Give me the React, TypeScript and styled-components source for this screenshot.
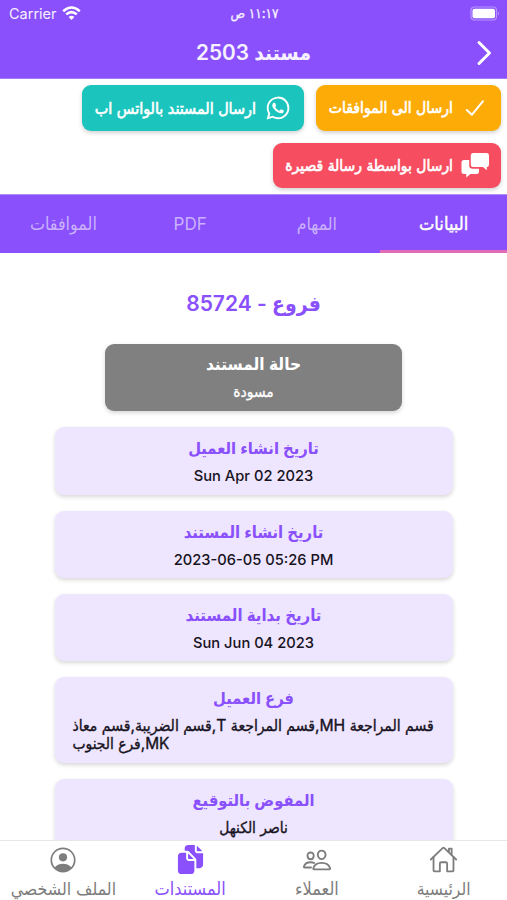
import React from "react";
import styled, { createGlobalStyle } from "styled-components";
import { IoDocuments, IoHomeOutline, IoLogoWhatsapp, IoPeopleOutline } from "react-icons/io5";

const PURPLE = "#8950fc";

const GlobalStyle = createGlobalStyle`
  * { box-sizing: border-box; }
  html, body { margin: 0; padding: 0; background: #fff; }
  body { font-family: Inter, "DejaVu Sans Condensed", "DejaVu Sans", sans-serif; }
`;

const Screen = styled.div`
  width: 507px;
  height: 900px;
  display: flex;
  flex-direction: column;
  overflow: hidden;
  direction: rtl;
  background: #fff;
`;

/* $ink thickens the glyphs for in-between weights; $shift nudges the baseline. */
const Text = styled.span<{ $size: number; $weight?: number; $ink?: number; $shift?: number }>`
  display: block;
  white-space: nowrap;
  font-size: ${(p) => p.$size}px;
  font-weight: ${(p) => p.$weight ?? 400};
  line-height: 20px;
  -webkit-text-stroke: ${(p) => p.$ink ?? 0}px currentColor;
  transform: translateY(${(p) => p.$shift ?? 0}px);
`;

const Header = styled.header`
  height: 79px;
  flex: none;
  background: ${PURPLE};
  color: #f6f0ff;
  border-bottom: 1px solid #a47bf8;
`;

const StatusBar = styled.div`
  height: 27px;
  direction: ltr;
  display: grid;
  grid-template-columns: 1fr auto 1fr;
  align-items: center;
  padding: 0 7px 0 9px;
`;

const Carrier = styled.div`
  display: flex;
  align-items: center;
  gap: 5px;
`;

const BatterySlot = styled.div`
  display: flex;
  justify-content: flex-end;
`;

const TitleBar = styled.div`
  height: 51px;
  display: grid;
  grid-template-columns: 46px 1fr 46px;
  align-items: center;
  justify-items: center;
`;

const Actions = styled.section`
  height: 115px;
  flex: none;
  display: flex;
  flex-wrap: wrap;
  align-content: flex-start;
  gap: 12px;
  padding: 6px 6px 0 0;
`;

const ActionButton = styled.button<{ $bg: string; $width: number; $height: number }>`
  width: ${(p) => p.$width}px;
  height: ${(p) => p.$height}px;
  display: flex;
  align-items: center;
  gap: 8px;
  padding: 0 12px;
  border: 0;
  border-radius: 9px;
  background: ${(p) => p.$bg};
  color: #fff;
  font-family: inherit;
  box-shadow: 0 2px 4px rgba(0, 0, 0, 0.18);
`;

const ButtonIcon = styled.span`
  width: 28px;
  height: 28px;
  flex: none;
  display: flex;
  align-items: center;
  justify-content: center;
`;

const ButtonLabel = styled.span`
  flex: 1;
  display: flex;
  justify-content: flex-start;
`;

const Tabs = styled.nav`
  height: 59px;
  flex: none;
  display: grid;
  grid-template-columns: repeat(4, 1fr);
  background: ${PURPLE};
  border-top: 1px solid #b08df8;
`;

const Tab = styled.div<{ $active?: boolean }>`
  display: flex;
  align-items: center;
  justify-content: center;
  color: ${(p) => (p.$active ? "#fff" : "#cbb0fc")};
  border-bottom: 3px solid ${(p) => (p.$active ? "#e26bb8" : PURPLE)};
`;

const Content = styled.main`
  flex: 1;
  min-height: 0;
  overflow: hidden;
  display: flex;
  flex-direction: column;
  align-items: center;
`;

const Heading = styled.h1`
  margin: 0;
  height: 91px;
  flex: none;
  display: flex;
  align-items: center;
  padding-top: 11px;
  color: ${PURPLE};
`;

const Card = styled.section<{ $height: number; $gray?: boolean }>`
  width: ${(p) => (p.$gray ? 297 : 398)}px;
  height: ${(p) => p.$height}px;
  margin-bottom: 16px;
  flex: none;
  padding-top: ${(p) => (p.$gray ? 10 : 11)}px;
  display: flex;
  flex-direction: column;
  align-items: center;
  gap: 8px;
  border-radius: 9px;
  background: ${(p) => (p.$gray ? "#808080" : "#eee5ff")};
  color: ${(p) => (p.$gray ? "#fff" : "#171321")};
  box-shadow: 0 2px 4px rgba(0, 0, 0, 0.16);
`;

const CardTitle = styled.div<{ $gray?: boolean }>`
  color: ${(p) => (p.$gray ? "#fff" : PURPLE)};
`;

const BranchList = styled.div`
  width: 362px;
  display: flex;
  flex-direction: column;
  align-items: flex-end;
  > span { line-height: 18px; }
`;

const BottomBar = styled.footer`
  height: 60px;
  flex: none;
  display: grid;
  grid-template-columns: repeat(4, 1fr);
  background: #fff;
  border-top: 1px solid #e8e8ea;
`;

const NavItem = styled.div<{ $active?: boolean }>`
  display: flex;
  flex-direction: column;
  align-items: center;
  padding-top: 4px;
  gap: 5px;
  color: ${(p) => (p.$active ? PURPLE : "#7d7d7d")};
`;

const NavIcon = styled.span`
  height: 29px;
  display: flex;
  align-items: center;
`;

const WifiIcon = () => (
  <svg width="19" height="15" viewBox="0 0 19 15" fill="none" stroke="#fff" strokeWidth="2.5">
    <path d="M1.2 5.2Q9.5-2.3 17.8 5.2" />
    <path d="M4.2 8.4Q9.5 3.9 14.8 8.4" />
    <path d="M6.6 10.9Q9.5 8.5 12.4 10.9L9.5 14Z" fill="#fff" stroke="none" />
  </svg>
);

const BatteryIcon = () => (
  <svg width="30" height="15" viewBox="0 0 30 15">
    <rect x="1" y="1" width="25.5" height="13" rx="3.5" fill="none" stroke="#b895ff" strokeWidth="1.2" />
    <rect x="2.5" y="2.8" width="22.5" height="9.5" rx="2" fill="#fff" />
    <path d="M28 5.5q2 2 0 4z" fill="#b895ff" />
  </svg>
);

const ChevronIcon = () => (
  <svg width="16" height="26" viewBox="0 0 16 26" fill="none" stroke="#fff" strokeWidth="3" strokeLinecap="round" strokeLinejoin="round">
    <path d="M3 2.500 13.500 13 3 23.500" />
  </svg>
);

const CheckIcon = () => (
  <svg width="20" height="18" viewBox="0 0 20 18" fill="none" stroke="#fff" strokeWidth="2" strokeLinecap="round" strokeLinejoin="round">
    <path d="M1.800 11 6.800 15.800 18 2.200" />
  </svg>
);

const CommentsIcon = () => (
  <svg width="28" height="25" viewBox="0 0 28 25" fill="#fff">
    <path d="M12.3 0H25.500Q28 0 28 2.500V11.500Q28 14 25.800 14V17.200L22 14H12.300Q9.800 14 9.800 11.500V2.500Q9.800 0 12.300 0Z" />
    <path d="M3 7H8.200V12.500Q8.200 15.800 11.800 15.800H18V18.500Q18 21 15.500 21H9.500L5.200 24.500V21H3Q.5 21 .5 18.500V9.500Q.5 7 3 7Z" />
  </svg>
);

const ProfileIcon = () => (
  <svg width="26" height="26" viewBox="0 0 26 26">
    <circle cx="13" cy="13" r="11.700" fill="none" stroke="currentColor" strokeWidth="1.700" />
    <circle cx="13" cy="10.300" r="4.100" fill="currentColor" />
    <path d="M4.500 20.500C7 17.600 10 16.800 13 16.800S19 17.600 21.500 20.500Q18 24.700 13 24.700T4.500 20.500Z" fill="currentColor" />
  </svg>
);

export default function App() {
  return (
    <>
      <GlobalStyle />
      <Screen>
        <Header>
          <StatusBar>
            <Carrier>
              <Text $size={14.5}>Carrier</Text>
              <WifiIcon />
            </Carrier>
            <Text $size={13.4} $ink={0.3} $shift={-1} dir="rtl">١١:١٧ ص</Text>
            <BatterySlot><BatteryIcon /></BatterySlot>
          </StatusBar>
          <TitleBar>
            <ChevronIcon />
            <Text $size={20.8} $weight={600}>مستند 2503</Text>
          </TitleBar>
        </Header>
        <Actions>
          <ActionButton $bg="#fcab07" $width={185} $height={46}>
            <ButtonIcon><CheckIcon /></ButtonIcon>
            <ButtonLabel><Text $size={15.6} $ink={0.6}>ارسال الى الموافقات</Text></ButtonLabel>
          </ActionButton>
          <ActionButton $bg="#1bc5bd" $width={222} $height={46}>
            <ButtonIcon><IoLogoWhatsapp size={26} /></ButtonIcon>
            <ButtonLabel><Text $size={16} $ink={0.6}>ارسال المستند بالواتس اب</Text></ButtonLabel>
          </ActionButton>
          <ActionButton $bg="#f64e60" $width={228} $height={45}>
            <ButtonIcon><CommentsIcon /></ButtonIcon>
            <ButtonLabel><Text $size={15.5} $ink={0.6}>ارسال بواسطة رسالة قصيرة</Text></ButtonLabel>
          </ActionButton>
        </Actions>
        <Tabs>
          <Tab $active><Text $size={18.2} $ink={0.4}>البيانات</Text></Tab>
          <Tab><Text $size={17.6} $shift={0.5}>المهام</Text></Tab>
          <Tab><Text $size={17} $shift={0.5}>PDF</Text></Tab>
          <Tab><Text $size={17.8} $shift={0.5}>الموافقات</Text></Tab>
        </Tabs>
        <Content>
          <Heading><Text $size={21} $weight={600}>فروع - 85724</Text></Heading>
          <Card $gray $height={67}>
            <CardTitle $gray><Text $size={17.2} $weight={600}>حالة المستند</Text></CardTitle>
            <Text $size={15.4} $ink={0.3}>مسودة</Text>
          </Card>
          <Card $height={67.5}>
            <CardTitle><Text $size={16.4} $weight={600}>تاريخ انشاء العميل</Text></CardTitle>
            <Text $size={14.7} $weight={500}>Sun Apr 02 2023</Text>
          </Card>
          <Card $height={67.5}>
            <CardTitle><Text $size={16.5} $weight={600}>تاريخ انشاء المستند</Text></CardTitle>
            <Text $size={14.7} $weight={500} dir="ltr">2023-06-05 05:26 PM</Text>
          </Card>
          <Card $height={67}>
            <CardTitle><Text $size={16.7} $weight={600}>تاريخ بداية المستند</Text></CardTitle>
            <Text $size={14.7} $weight={500}>Sun Jun 04 2023</Text>
          </Card>
          <Card $height={86}>
            <CardTitle><Text $size={16.4} $weight={600}>فرع العميل</Text></CardTitle>
            <BranchList>
              <Text $size={15.65} $ink={0.35} $shift={1}>قسم المراجعة MH,قسم المراجعة T,قسم الضريبة,قسم معاذ</Text>
              <Text $size={15.4} $ink={0.35} $shift={1}>MK,فرع الجنوب</Text>
            </BranchList>
          </Card>
          <Card $height={68}>
            <CardTitle><Text $size={16.4} $weight={600}>المفوض بالتوقيع</Text></CardTitle>
            <Text $size={15.4} $ink={0.35}>ناصر الكنهل</Text>
          </Card>
        </Content>
        <BottomBar>
          <NavItem><NavIcon><IoHomeOutline size={29} /></NavIcon><Text $size={17.4}>الرئيسية</Text></NavItem>
          <NavItem><NavIcon><IoPeopleOutline size={30} /></NavIcon><Text $size={18}>العملاء</Text></NavItem>
          <NavItem $active><NavIcon><IoDocuments size={31} /></NavIcon><Text $size={18}>المستندات</Text></NavItem>
          <NavItem><NavIcon><ProfileIcon /></NavIcon><Text $size={17.6}>الملف الشخصي</Text></NavItem>
        </BottomBar>
      </Screen>
    </>
  );
}
